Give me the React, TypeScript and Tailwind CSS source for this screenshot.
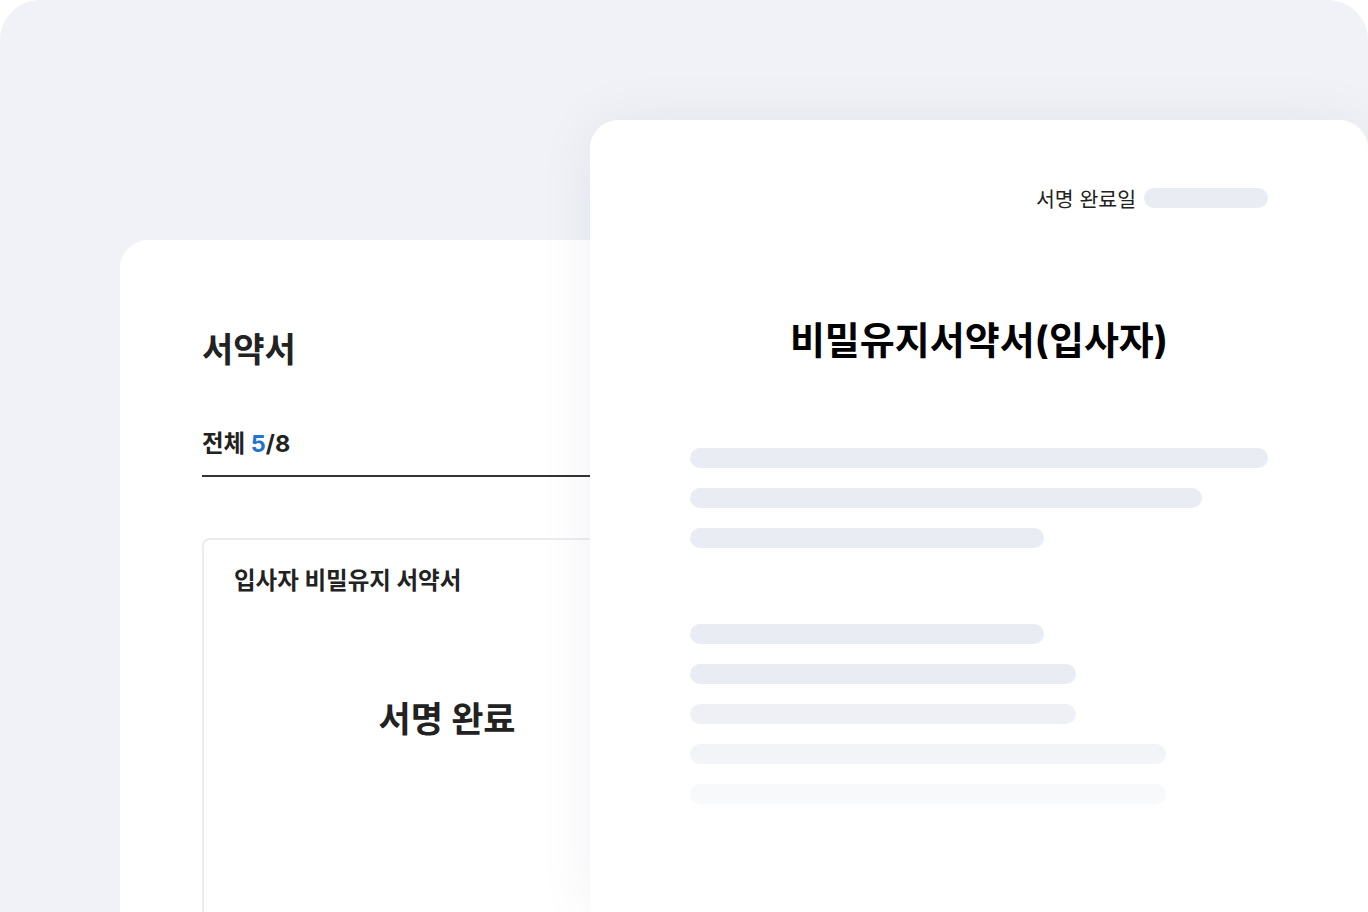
import React from 'react';

const FONT = "font-['Inter','Noto_Sans_CJK_KR',sans-serif]";

function Bar({ w, tone }: { w: string; tone: string }) {
  return <div className={`h-5 rounded-full ${w} ${tone}`} />;
}

export default function App() {
  return (
    <div className={`h-[912px] w-full bg-white ${FONT}`}>
      <div className="relative h-full w-full overflow-hidden rounded-t-[40px] bg-[#f0f2f7]">
        {/* Back card: contract list */}
        <div className="ml-[120px] mt-[240px] h-[672px] w-[700px] rounded-tl-[28px] rounded-tr-[28px] bg-white pl-[82px] pt-[90px]">
          <h2 className="text-[34px] font-bold leading-[40px] text-[#222]">서약서</h2>
          <div className="mt-[59px] w-[560px] border-b-2 border-[#333] pb-[16px]">
            <p className="text-[23.5px] font-bold leading-[30px] text-[#222]">
              전체 <span className="text-[#1f75d1]">5</span>/8
            </p>
          </div>
          <div className="mt-[61px] h-[400px] w-[490px] rounded-[8px] border-2 border-[#ececef] px-[30px] pt-[26px]">
            <p className="text-[23.5px] font-bold leading-[30px] text-[#222]">입사자 비밀유지 서약서</p>
            <p className="mt-[103px] text-center text-[35px] font-bold leading-[40px] text-[#222]">서명 완료</p>
          </div>
        </div>

        {/* Front card: document preview */}
        <div className="absolute bottom-0 left-[590px] right-0 top-[120px] rounded-t-[28px] bg-white px-[100px] pt-[66px] shadow-[0_0_60px_rgba(30,40,80,0.06)]">
          <div className="flex items-start justify-end gap-2">
            <span className="text-[20.5px] leading-[28px] text-[#222]">서명 완료일</span>
            <div className="mt-[2px] h-5 w-[124px] rounded-full bg-[#e9ecf3]" />
          </div>
          <h1 className="mt-[104px] text-center text-[38px] font-bold leading-[44px] text-black">
            비밀유지서약서(입사자)
          </h1>
          <div className="mt-[86px] flex flex-col gap-5">
            <Bar w="w-full" tone="bg-[#e9ecf3]" />
            <Bar w="w-[512px]" tone="bg-[#e9ecf3]" />
            <Bar w="w-[354px]" tone="bg-[#e9ecf3]" />
          </div>
          <div className="mt-[76px] flex flex-col gap-5">
            <Bar w="w-[354px]" tone="bg-[#e9ecf3]" />
            <Bar w="w-[386px]" tone="bg-[#e9ecf3]" />
            <Bar w="w-[386px]" tone="bg-[#eef0f5]" />
            <Bar w="w-[476px]" tone="bg-[#f3f4f8]" />
            <Bar w="w-[476px]" tone="bg-[#f8f9fa]" />
          </div>
        </div>
      </div>
    </div>
  );
}
